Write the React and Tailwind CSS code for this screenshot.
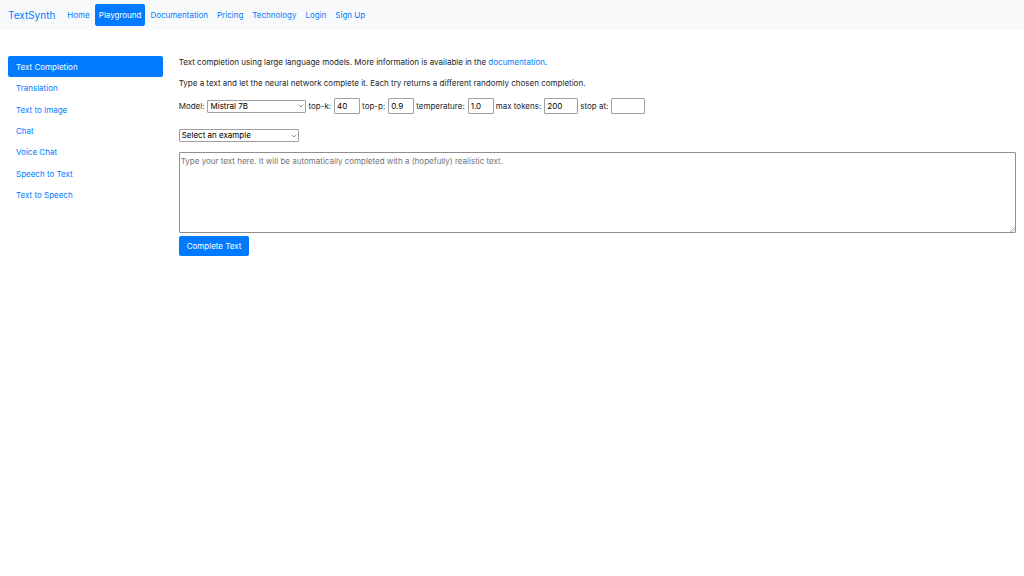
import React from 'react';
import { ChevronDown } from 'lucide-react';

const NAV_LINKS = ['Home', 'Playground', 'Documentation', 'Pricing', 'Technology', 'Login', 'Sign Up'];

const SIDE_LINKS = [
  'Text Completion',
  'Translation',
  'Text to Image',
  'Chat',
  'Voice Chat',
  'Speech to Text',
  'Text to Speech',
];

const Navbar = ({ active }) => (
  <nav className="flex items-center bg-[#f8f9fa] px-2 py-1 text-[#007bff]">
    <a href="#" className="mr-2 text-[10px] leading-4">TextSynth</a>
    <ul className="flex flex-wrap gap-px">
      {NAV_LINKS.map((link) => (
        <li key={link}>
          <a
            href="#"
            className={`block rounded-[2px] px-1 py-1 leading-[14px] ${link === active ? 'bg-[#007bff] text-white' : ''}`}
          >
            {link}
          </a>
        </li>
      ))}
    </ul>
  </nav>
);

const Sidebar = ({ active }) => (
  <aside className="w-1/6 px-2">
    <ul className="grid min-h-[150px] auto-rows-fr">
      {SIDE_LINKS.map((link) => (
        <li key={link} className="flex">
          <a
            href="#"
            className={`flex flex-1 items-center rounded-[2px] px-2 ${link === active ? 'bg-[#007bff] text-white' : 'text-[#007bff]'}`}
          >
            {link}
          </a>
        </li>
      ))}
    </ul>
  </aside>
);

const Select = ({ id, label, option, className }) => (
  <span className={`relative inline-flex items-center ${className}`}>
    <select
      id={id}
      aria-label={label}
      className="h-[13px] w-full appearance-none rounded-[1px] border border-[#a0a0a0] bg-white pl-[2px] pr-3 leading-[11px] text-black"
    >
      <option>{option}</option>
    </select>
    <ChevronDown className="pointer-events-none absolute right-px size-2 text-[#555]" strokeWidth={2} />
  </span>
);

const Field = ({ id, label, value, className }) => (
  <span className="flex items-center gap-[3px]">
    <label htmlFor={id}>{label}</label>
    <input
      id={id}
      type="text"
      defaultValue={value}
      className={`h-4 rounded-[1px] border border-[#a0a0a0] bg-white px-[2px] text-black ${className}`}
    />
  </span>
);

const CompletionForm = () => (
  <form onSubmit={(e) => e.preventDefault()}>
    <div className="mt-[9px] flex flex-wrap items-center gap-x-[2px]">
      <span className="flex items-center gap-[3px]">
        <label htmlFor="model">Model:</label>
        <Select id="model" option="Mistral 7B" className="w-[99px]" />
      </span>
      <Field id="topk" label="top-k:" value="40" className="w-[26px]" />
      <Field id="topp" label="top-p:" value="0.9" className="w-[26px]" />
      <Field id="temperature" label="temperature:" value="1.0" className="w-[26px]" />
      <Field id="max_tokens" label="max tokens:" value="200" className="w-[34px]" />
      <Field id="stop" label="stop at:" value="" className="w-[34px]" />
    </div>
    <div className="mt-[15px] flex">
      <Select id="example" label="Example" option="Select an example" className="w-[120px]" />
    </div>
    <div className="relative mt-[10px]">
      <textarea
        aria-label="Text"
        placeholder="Type your text here. It will be automatically completed with a (hopefully) realistic text."
        className="block h-[81px] w-full rounded-[1px] border border-[#8f8f8f] bg-white px-px py-[2px] placeholder:text-[#757575] [&::-webkit-resizer]:bg-transparent"
      />
      <svg viewBox="0 0 5 5" className="pointer-events-none absolute bottom-px right-px size-[5px]" stroke="#777" strokeWidth="0.6">
        <path d="M0 5 5 0M2.5 5 5 2.5" />
      </svg>
    </div>
    <button type="submit" className="mt-[3px] rounded-[2px] bg-[#007bff] px-2 py-1 text-white">
      Complete Text
    </button>
  </form>
);

const App = () => (
  <div className="bg-white font-['Inter','Liberation_Sans',sans-serif] text-[8px] leading-[12px] text-[#212529]">
    <Navbar active="Playground" />
    <div className="flex pt-[26px]">
      <Sidebar active="Text Completion" />
      <main className="w-5/6 px-2">
        <p className="mb-[9px]">
          Text completion using large language models. More information is available in the{' '}
          <a href="#" className="text-[#007bff]">documentation</a>.
        </p>
        <p>
          Type a text and let the neural network complete it. Each try returns a different randomly
          chosen completion.
        </p>
        <CompletionForm />
      </main>
    </div>
  </div>
);

export default App;
